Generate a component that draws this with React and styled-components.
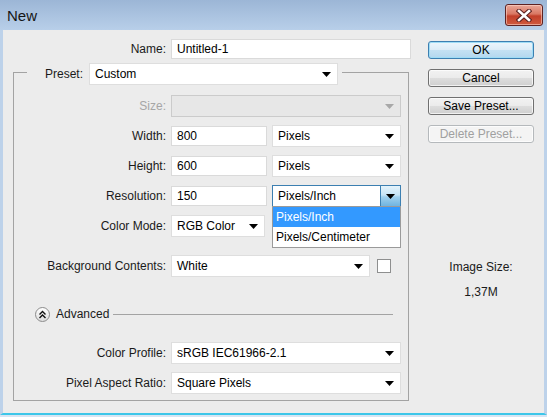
import React from 'react';
import styled, { createGlobalStyle } from 'styled-components';

const GlobalStyle = createGlobalStyle`
  html, body {
    margin: 0;
    padding: 0;
    background: #ececec;
  }
  body {
    font-family: "Liberation Sans", Arial, sans-serif;
    font-size: 12px;
    color: #1a1a1a;
  }
`;

const Window = styled.div`
  width: 547px;
  height: 417px;
  box-sizing: border-box;
  display: flex;
  flex-direction: column;
  overflow: hidden;
  padding-bottom: 2px;
  background: #d6e5f3;
`;

const TitleBar = styled.div`
  flex: none;
  height: 30px;
  box-sizing: border-box;
  display: flex;
  align-items: center;
  justify-content: space-between;
  padding: 0 4px 0 7px;
  background: linear-gradient(#9cb6d6, #b8cfe9);
`;

const Title = styled.span`
  font-size: 15px;
  color: #151515;
`;

const CloseButton = styled.div`
  width: 38px;
  height: 22px;
  box-sizing: border-box;
  display: flex;
  align-items: center;
  justify-content: center;
  border: 1px solid #5e2222;
  border-radius: 3px;
  background: linear-gradient(#e9a899 0%, #d97763 45%, #c23f2a 55%, #cf5a3e 100%);
  box-shadow: inset 0 0 0 1px rgba(255, 220, 210, 0.55);
`;

const Frame = styled.div`
  flex: 1;
  display: flex;
  background: #ececec;
  border-left: 3px solid #bdd2ea;
  border-right: 3px solid #bdd2ea;
  border-bottom: 2px solid #3cc6e9;
`;

const Form = styled.div`
  flex: none;
  width: 408px;
  padding-top: 9px;
`;

const Row = styled.div`
  display: flex;
  align-items: center;
  height: ${({ $h }) => $h || 22}px;
  margin-top: ${({ $gap }) => ($gap === undefined ? 8 : $gap)}px;
`;

const Label = styled.span`
  flex: none;
  width: ${({ $w }) => $w || 157}px;
  box-sizing: border-box;
  padding-right: 5px;
  text-align: right;
  white-space: nowrap;
  color: ${({ $disabled }) => ($disabled ? '#a6a6a6' : '#1a1a1a')};
`;

const Field = styled.div`
  flex: none;
  width: ${({ $w }) => $w}px;
  height: 20px;
  box-sizing: border-box;
  display: flex;
  align-items: center;
  padding-left: 5px;
  background: #fff;
  border: 1px solid #dadada;
  color: #000;
`;

const Select = styled.div`
  position: relative;
  flex: none;
  width: ${({ $w }) => $w}px;
  height: 22px;
  box-sizing: border-box;
  display: flex;
  align-items: center;
  padding-left: 5px;
  margin-left: ${({ $ml }) => $ml || 0}px;
  color: #000;
  background: ${({ $disabled }) => ($disabled ? '#e7e7e7' : '#fff')};
  border: 1px solid
    ${({ $open, $disabled }) => ($open ? '#3c7fb1' : $disabled ? '#cbcbcb' : '#dedede')};
`;

const Value = styled.span`
  flex: 1;
  white-space: nowrap;
`;

const ArrowBox = styled.div`
  flex: none;
  width: ${({ $open }) => ($open ? 20 : 22)}px;
  height: 100%;
  display: flex;
  align-items: center;
  justify-content: center;
  box-sizing: border-box;
  ${({ $open }) =>
    $open &&
    `
    border-left: 1px solid #3c7fb1;
    background: linear-gradient(#e4f3fb 0%, #c6e4f6 45%, #9fd0ee 55%, #6fb4e0 100%);
  `}
`;

const Menu = styled.div`
  position: absolute;
  top: 100%;
  left: -1px;
  right: -1px;
  background: #fff;
  border: 1px solid #9a9a9a;
  z-index: 2;
`;

const MenuItem = styled.div`
  height: 20px;
  display: flex;
  align-items: center;
  padding-left: 3px;
  color: ${({ $active }) => ($active ? '#fff' : '#000')};
  background: ${({ $active }) => ($active ? '#3399ff' : 'transparent')};
`;

const Check = styled.div`
  flex: none;
  width: 14px;
  height: 14px;
  box-sizing: border-box;
  margin-left: 7px;
  background: #fff;
  border: 1px solid #8e8f8f;
`;

const Group = styled.fieldset`
  width: 396px;
  box-sizing: border-box;
  margin: 0 0 0 10px;
  padding: 0 0 6px;
  min-inline-size: 0;
  border: 1px solid #a3a3a3;
`;

const Legend = styled.legend`
  display: flex;
  align-items: center;
  margin-left: 13px;
  padding: 4px 4px 0 18px;
`;

const AdvancedRow = styled(Row)`
  padding-left: 21px;
`;

const Toggle = styled.div`
  flex: none;
  width: 15px;
  height: 15px;
  box-sizing: border-box;
  border-radius: 50%;
  border: 1px solid #8c8c8c;
  background: linear-gradient(#ffffff, #dedede);
  display: flex;
  align-items: center;
  justify-content: center;
`;

const AdvancedText = styled.span`
  margin-left: 6px;
`;

const Rule = styled.div`
  flex: 1;
  height: 1px;
  margin: 0 15px 0 4px;
  background: #a3a3a3;
`;

const Side = styled.div`
  flex: none;
  width: 106px;
  margin-left: 17px;
  padding-top: 11px;
  display: flex;
  flex-direction: column;
  gap: 10px;
`;

const Button = styled.div`
  height: 18px;
  box-sizing: border-box;
  display: flex;
  align-items: center;
  justify-content: center;
  border-radius: 3px;
  border: 1px solid ${({ $default, $disabled }) => ($default ? '#3c7fb1' : $disabled ? '#b5b9bc' : '#707070')};
  color: ${({ $disabled }) => ($disabled ? '#a0a0a0' : '#000')};
  background: ${({ $default, $disabled }) =>
    $disabled
      ? '#f4f4f4'
      : $default
      ? 'linear-gradient(#ecf6fc 0%, #dcecf7 48%, #c4e1f3 52%, #b3d7ef 100%)'
      : 'linear-gradient(#f2f2f2 0%, #ebebeb 48%, #dddddd 52%, #cfcfcf 100%)'};
  box-shadow: ${({ $default }) => ($default ? 'inset 0 0 0 1px #9fdcf5' : 'inset 0 0 0 1px rgba(255,255,255,0.7)')};
`;

const ImageSize = styled.div`
  margin-top: 107px;
  text-align: center;
  line-height: 14px;
`;

const SizeValue = styled.div`
  margin-top: 11px;
`;

const Arrow = ({ color = '#000' }) => (
  <svg width="9" height="5" viewBox="0 0 9 5">
    <polygon points="0,0 9,0 4.5,5" fill={color} />
  </svg>
);

const Dropdown = ({ width, value, disabled, open, ml, children }) => (
  <Select $w={width} $disabled={disabled} $open={open} $ml={ml}>
    <Value>{value}</Value>
    <ArrowBox $open={open}>
      <Arrow color={disabled ? '#a8a8a8' : '#000'} />
    </ArrowBox>
    {children}
  </Select>
);

const CloseIcon = () => (
  <svg width="16" height="13" viewBox="0 0 16 13">
    <g strokeLinecap="square">
      <path d="M3 2 L13 11 M13 2 L3 11" stroke="#5a2020" strokeWidth="4.6" />
      <path d="M3 2 L13 11 M13 2 L3 11" stroke="#ffffff" strokeWidth="2.6" />
    </g>
  </svg>
);

const ChevronsUp = () => (
  <svg width="9" height="9" viewBox="0 0 9 9">
    <path d="M1.5 4.5 L4.5 1.5 L7.5 4.5 M1.5 8 L4.5 5 L7.5 8" fill="none" stroke="#111" strokeWidth="1.4" />
  </svg>
);

export default function App() {
  return (
    <>
      <GlobalStyle />
      <Window>
        <TitleBar>
          <Title>New</Title>
          <CloseButton>
            <CloseIcon />
          </CloseButton>
        </TitleBar>
        <Frame>
          <Form>
            <Row $h={20} $gap={0}>
              <Label $w={168}>Name:</Label>
              <Field $w={240}>Untitled-1</Field>
            </Row>
            <Group>
              <Legend>
                <span>Preset:</span>
                <Dropdown width={249} ml={6} value="Custom" />
              </Legend>
              <Row $gap={10}>
                <Label $disabled>Size:</Label>
                <Dropdown width={230} disabled value="" />
              </Row>
              <Row>
                <Label>Width:</Label>
                <Field $w={96}>800</Field>
                <Dropdown width={129} ml={5} value="Pixels" />
              </Row>
              <Row>
                <Label>Height:</Label>
                <Field $w={96}>600</Field>
                <Dropdown width={129} ml={5} value="Pixels" />
              </Row>
              <Row>
                <Label>Resolution:</Label>
                <Field $w={96}>150</Field>
                <Dropdown width={129} ml={5} value="Pixels/Inch" open>
                  <Menu>
                    <MenuItem $active>Pixels/Inch</MenuItem>
                    <MenuItem>Pixels/Centimeter</MenuItem>
                  </Menu>
                </Dropdown>
              </Row>
              <Row>
                <Label>Color Mode:</Label>
                <Dropdown width={94} value="RGB Color" />
              </Row>
              <Row $gap={18}>
                <Label>Background Contents:</Label>
                <Dropdown width={199} value="White" />
                <Check />
              </Row>
              <AdvancedRow $gap={26}>
                <Toggle>
                  <ChevronsUp />
                </Toggle>
                <AdvancedText>Advanced</AdvancedText>
                <Rule />
              </AdvancedRow>
              <Row $gap={17}>
                <Label>Color Profile:</Label>
                <Dropdown width={230} value="sRGB IEC61966-2.1" />
              </Row>
              <Row>
                <Label>Pixel Aspect Ratio:</Label>
                <Dropdown width={230} value="Square Pixels" />
              </Row>
            </Group>
          </Form>
          <Side>
            <Button $default>OK</Button>
            <Button>Cancel</Button>
            <Button>Save Preset...</Button>
            <Button $disabled>Delete Preset...</Button>
            <ImageSize>
              <div>Image Size:</div>
              <SizeValue>1,37M</SizeValue>
            </ImageSize>
          </Side>
        </Frame>
      </Window>
    </>
  );
}
